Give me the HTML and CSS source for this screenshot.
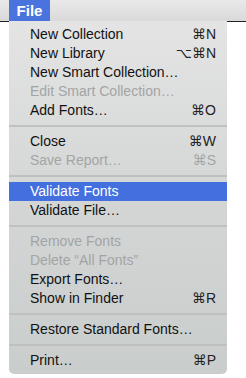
FILE: index.html
```html
<!DOCTYPE html>
<html lang="en">
<head>
    <meta charset="UTF-8">
    <meta name="viewport" content="width=device-width, initial-scale=1.0">
    <title>File menu</title>
    <link rel="stylesheet" href="styles.css">
</head>
<body>
    <div class="menubar">
        <span class="menubar-item active">File</span>
    </div>
    <div class="menu">
        <div class="item"><span>New Collection</span><span class="key">&#8984;N</span></div>
        <div class="item"><span>New Library</span><span class="key">&#8997;&#8984;N</span></div>
        <div class="item"><span>New Smart Collection&hellip;</span></div>
        <div class="item disabled"><span>Edit Smart Collection&hellip;</span></div>
        <div class="item"><span>Add Fonts&hellip;</span><span class="key">&#8984;O</span></div>
        <div class="sep"></div>
        <div class="item"><span>Close</span><span class="key">&#8984;W</span></div>
        <div class="item disabled"><span>Save Report&hellip;</span><span class="key">&#8984;S</span></div>
        <div class="sep"></div>
        <div class="item selected"><span>Validate Fonts</span></div>
        <div class="item"><span>Validate File&hellip;</span></div>
        <div class="sep"></div>
        <div class="item disabled"><span>Remove Fonts</span></div>
        <div class="item disabled"><span>Delete &ldquo;All Fonts&rdquo;</span></div>
        <div class="item"><span>Export Fonts&hellip;</span></div>
        <div class="item"><span>Show in Finder</span><span class="key">&#8984;R</span></div>
        <div class="sep"></div>
        <div class="item"><span>Restore Standard Fonts&hellip;</span></div>
        <div class="sep"></div>
        <div class="item"><span>Print&hellip;</span><span class="key">&#8984;P</span></div>
    </div>
</body>
</html>
```

FILE: styles.css
```css
body {
    margin: 0;
    padding: 0;
    background: #fff;
    font-family: "Liberation Sans", Arial, sans-serif;
    font-size: 14px;
    color: #111;
}

.menubar {
    height: 21px;
    background: linear-gradient(#e9e9e9, #d9d9d9);
    border-bottom: 1px solid #222;
    display: flex;
}

.menubar-item {
    margin-left: 9px;
    width: 41px;
    height: 22px;
    line-height: 22px;
    text-align: center;
    color: #000;
    font-size: 15px;
    font-weight: bold;
}

.menubar-item.active {
    background: #4a74dd;
    color: #fff;
}

.menu {
    width: 218px;
    margin-left: 9px;
    margin-top: -1px;
    padding: 4px 0 4px;
    background: linear-gradient(#e4e4e4, #d4d6d6 50%, #c9cdcc);
    border-radius: 0 0 5px 5px;
    position: relative;
}

.item {
    height: 19px;
    line-height: 19px;
    padding: 0 11px 0 21px;
    display: flex;
    justify-content: space-between;
    white-space: nowrap;
}

.item .key {
    font-family: "Liberation Sans", "DejaVu Sans", sans-serif;
    font-size: 14px;
    color: #222;
}

.item.disabled,
.item.disabled .key {
    color: #a3a5a5;
}

.item.selected {
    background: #4470df;
    color: #fff;
}

.sep {
    height: 12px;
    display: flex;
    align-items: center;
}

.sep::before {
    content: "";
    flex: 1;
    height: 2px;
    background: #bfc1c1;
}
```
